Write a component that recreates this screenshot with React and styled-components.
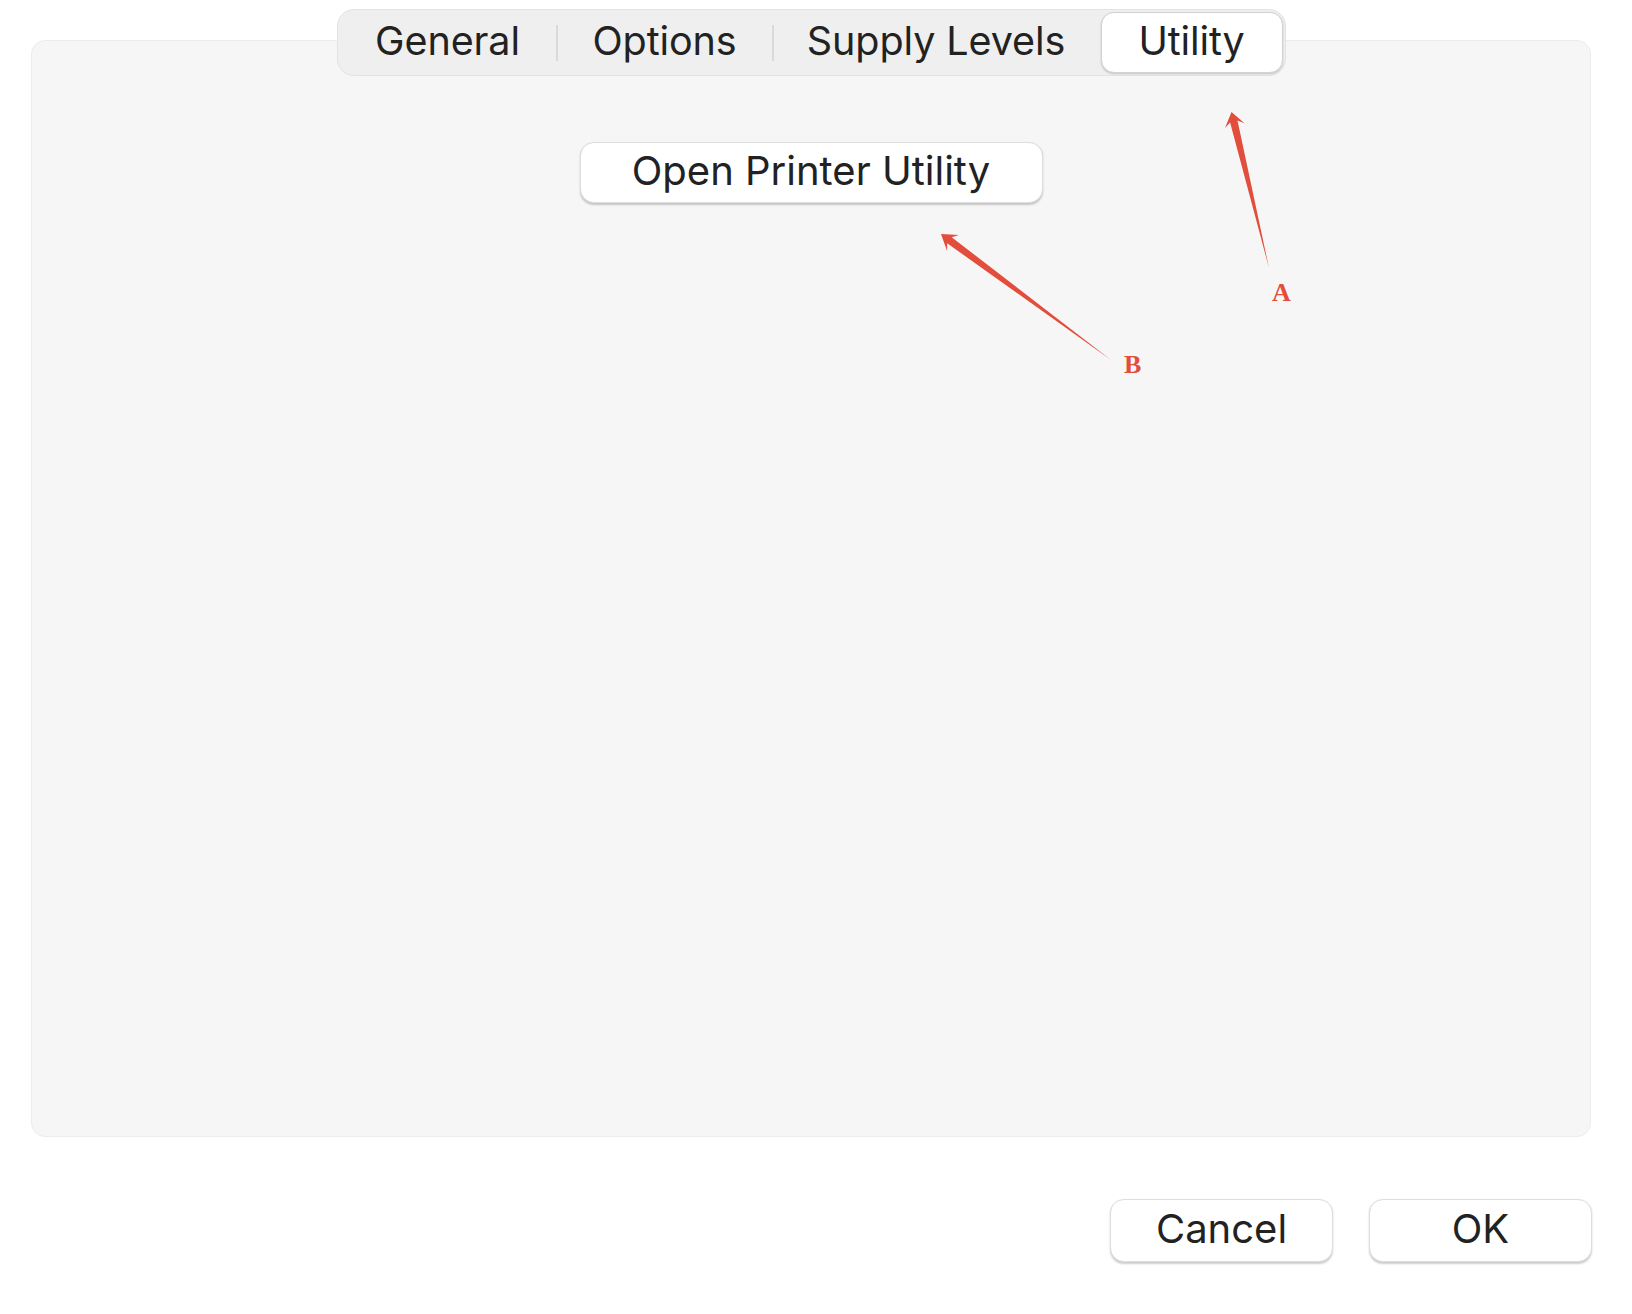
import React from "react";
import styled, { createGlobalStyle } from "styled-components";

const GlobalStyle = createGlobalStyle`
  html, body {
    margin: 0;
    padding: 0;
    background: #ffffff;
  }
  body {
    font-family: Inter, "Noto Sans", "Liberation Sans", sans-serif;
    color: #222222;
  }
`;

const Page = styled.div`
  position: relative;
  width: 1632px;
  height: 1314px;
  box-sizing: border-box;
  padding: 9px 41px 0 31px;
  display: flex;
  flex-direction: column;
  overflow: hidden;
`;

const TabView = styled.div`
  display: flex;
  flex-direction: column;
  align-items: center;
`;

const TabBar = styled.div`
  position: relative;
  z-index: 1;
  display: flex;
  align-items: center;
  height: 67px;
  box-sizing: border-box;
  padding: 2px;
  margin-bottom: -36px;
  background: #efefef;
  border: 1px solid #e3e3e3;
  border-radius: 17px;
`;

const Tab = styled.div`
  display: flex;
  align-items: center;
  justify-content: center;
  box-sizing: border-box;
  width: ${(p) => p.$w}px;
  height: 61px;
  padding-bottom: 3px;
  font-size: 39.5px;
  letter-spacing: -0.1px;
  color: #222222;
  border-radius: 13px;
  background: ${(p) => (p.$active ? "#ffffff" : "transparent")};
  border: 1px solid ${(p) => (p.$active ? "#d2d2d2" : "transparent")};
  box-shadow: ${(p) => (p.$active ? "0 1px 2px rgba(0,0,0,0.18)" : "none")};
`;

const Separator = styled.div`
  width: 2px;
  height: 36px;
  background: ${(p) => (p.$hidden ? "transparent" : "#dadada")};
  flex: none;
`;

const Panel = styled.div`
  height: 1097px;
  align-self: stretch;
  box-sizing: border-box;
  padding-top: 101px;
  display: flex;
  flex-direction: column;
  align-items: center;
  background: #f6f6f6;
  border: 1px solid #ececec;
  border-radius: 14px;
`;

const PushButton = styled.button`
  display: flex;
  align-items: center;
  justify-content: center;
  box-sizing: border-box;
  width: ${(p) => p.$w}px;
  height: ${(p) => p.$h}px;
  padding: 0 0 4px 0;
  font-family: Inter, "Noto Sans", "Liberation Sans", sans-serif;
  font-size: 40px;
  letter-spacing: 0;
  color: #222222;
  background: #ffffff;
  border: 1px solid #dedede;
  border-radius: 14px;
  box-shadow: 0 1.5px 2px rgba(0, 0, 0, 0.2);
`;

const Footer = styled.div`
  display: flex;
  justify-content: flex-end;
  gap: 36px;
  margin-top: 62px;
  margin-right: -1px;
`;

const Annotations = styled.svg`
  position: absolute;
  left: 0;
  top: 0;
  width: 1632px;
  height: 1314px;
  pointer-events: none;
`;

const Label = styled.text`
  font-family: "Liberation Serif", "DejaVu Serif", serif;
  font-weight: 700;
  font-size: 26px;
  fill: #e24e3b;
`;

function arrowPoints(tip, tail, headLen, headHalf, shaftHalf) {
  const dx = tip[0] - tail[0];
  const dy = tip[1] - tail[1];
  const len = Math.hypot(dx, dy);
  const ux = dx / len;
  const uy = dy / len;
  const px = -uy;
  const py = ux;
  const base = [tip[0] - ux * headLen, tip[1] - uy * headLen];
  const notch = [tip[0] - ux * headLen * 0.7, tip[1] - uy * headLen * 0.7];
  const pts = [
    tip,
    [base[0] + px * headHalf, base[1] + py * headHalf],
    [notch[0] + px * shaftHalf, notch[1] + py * shaftHalf],
    tail,
    [notch[0] - px * shaftHalf, notch[1] - py * shaftHalf],
    [base[0] - px * headHalf, base[1] - py * headHalf],
  ];
  return pts.map((p) => `${p[0].toFixed(1)},${p[1].toFixed(1)}`).join(" ");
}

const tabs = [
  { label: "General", w: 216 },
  { label: "Options", w: 214 },
  { label: "Supply Levels", w: 325 },
  { label: "Utility", w: 182, active: true },
];

export default function App() {
  return (
    <>
      <GlobalStyle />
      <Page>
        <TabView>
          <TabBar>
            {tabs.map((t, i) => (
              <React.Fragment key={t.label}>
                {i > 0 && (
                  <Separator $hidden={t.active || tabs[i - 1].active} />
                )}
                <Tab $w={t.w} $active={t.active}>
                  {t.label}
                </Tab>
              </React.Fragment>
            ))}
          </TabBar>
          <Panel>
            <PushButton $w={463} $h={61}>Open Printer Utility</PushButton>
          </Panel>
        </TabView>
        <Footer>
          <PushButton $w={223} $h={63}>Cancel</PushButton>
          <PushButton $w={223} $h={63}>OK</PushButton>
        </Footer>
        <Annotations viewBox="0 0 1632 1314">
          <polygon
            points={arrowPoints([1231.5, 112], [1269, 268], 14, 10, 3.8)}
            fill="#e24e3b"
          />
          <polygon
            points={arrowPoints([941, 234], [1111, 360], 15, 10, 3.8)}
            fill="#e24e3b"
          />
          <Label x="1272" y="301">A</Label>
          <Label x="1124" y="373">B</Label>
        </Annotations>
      </Page>
    </>
  );
}
